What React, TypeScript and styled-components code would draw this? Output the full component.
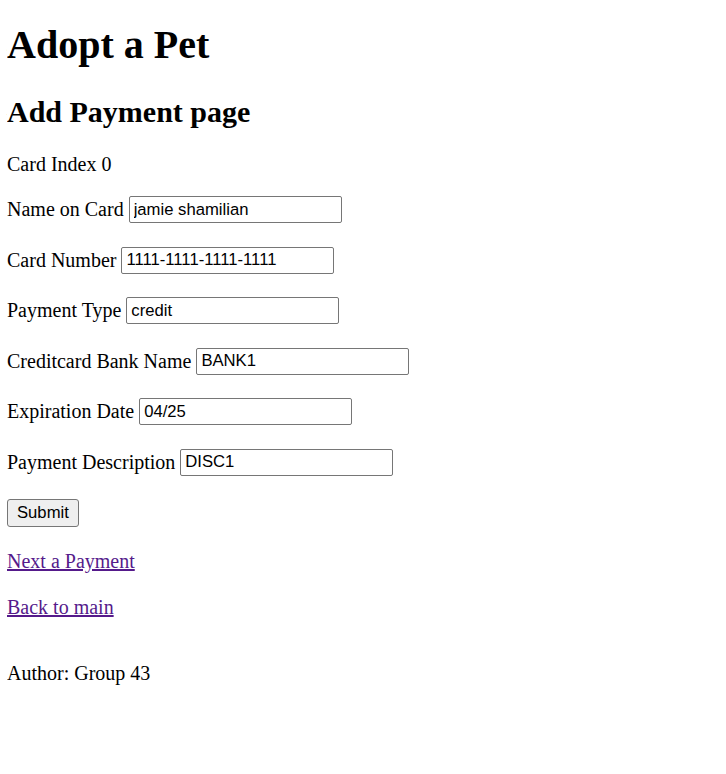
import React from "react";
import styled, { createGlobalStyle } from "styled-components";

const GlobalStyle = createGlobalStyle`
  html, body { background: #ffffff; }
  body {
    margin: 7px;
    font-family: "Liberation Serif", "Times New Roman", serif;
    font-size: 20px;
    color: #000000;
  }
`;

const Title = styled.h1`
  font-size: 40px;
  font-weight: bold;
  margin: 13.8px 0 26.8px;
`;

const Subtitle = styled.h2`
  font-size: 30px;
  font-weight: bold;
  margin: 24.9px 0;
`;

const Para = styled.p`
  margin: 20px 0 18px;
`;

const Row = styled.div<{ $last?: boolean }>`
  margin: 0 0 ${(p) => (p.$last ? "19px" : "20px")};
  display: flex;
  align-items: center;
  gap: 5px;
  height: 30.5px;
`;

const Label = styled.span`
  font-size: 20px;
`;

const Input = styled.input`
  box-sizing: border-box;
  width: 213px;
  height: 27px;
  padding: 1px 4px;
  border: 1px solid #767676;
  border-radius: 2px;
  font-family: "Liberation Sans", Arial, sans-serif;
  font-size: 16.67px;
  color: #000000;
  background: #ffffff;
  outline: none;
`;

const Button = styled.button`
  box-sizing: border-box;
  height: 28px;
  padding: 1px 9px;
  border: 1px solid #767676;
  border-radius: 3px;
  background: #efefef;
  font-family: "Liberation Sans", Arial, sans-serif;
  font-size: 16.67px;
  color: #000000;
`;

const LinkPara = styled.p`
  margin: 22px 0 23px;
`;

const Link = styled.a`
  color: #551a8b;
  text-decoration: underline;
`;

const Footer = styled.p`
  margin: 43px 0 20px;
`;

const fields: { label: string; value: string }[] = [
  { label: "Name on Card", value: "jamie shamilian" },
  { label: "Card Number", value: "1111-1111-1111-1111" },
  { label: "Payment Type", value: "credit" },
  { label: "Creditcard Bank Name", value: "BANK1" },
  { label: "Expiration Date", value: "04/25" },
  { label: "Payment Description", value: "DISC1" },
];

export default function App() {
  return (
    <>
      <GlobalStyle />
      <Title>Adopt a Pet</Title>
      <Subtitle>Add Payment page</Subtitle>
      <form onSubmit={(e) => e.preventDefault()}>
        <Para>Card Index 0</Para>
        {fields.map((f) => (
          <Row key={f.label}>
            <Label>{f.label}</Label>
            <Input type="text" defaultValue={f.value} />
          </Row>
        ))}
        <Row $last>
          <Button type="submit">Submit</Button>
        </Row>
      </form>
      <LinkPara>
        <Link href="#">Next a Payment</Link>
      </LinkPara>
      <LinkPara>
        <Link href="#">Back to main</Link>
      </LinkPara>
      <Footer>Author: Group 43</Footer>
    </>
  );
}
